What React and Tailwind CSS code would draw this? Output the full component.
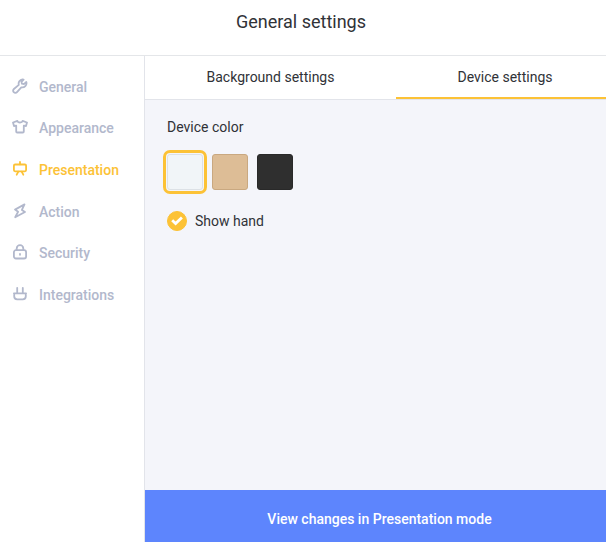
import { useState } from "react";

const icons = {
  General: (
    <path d="M10.500 1.500a4.200 4.200 0 0 0-3.700 5.400L1.900 11a2.200 2.200 0 1 0 3.100 3.100L9.300 9.300a4.200 4.200 0 0 0 5-5.300l-2.400 2.100-2-.4-.4-1.800 2.100-2.200z" />
  ),
  Appearance: (
    <path d="M5.400 1.900 1 3.500l1 3.500 2.200-.3v5.800c0 .6.400 1 1 1h5.600c.6 0 1-.4 1-1V6.700l2.200.3 1-3.500-4.400-1.600C10.200 4 5.800 4 5.400 1.900z" />
  ),
  Presentation: (
    <>
      <rect x="1.900" y="3.500" width="12.200" height="6.800" rx="1.200" />
      <path d="M8 1v2.300M6.200 10.800l-1.500 2.900M9.800 10.800l1.500 2.900" />
    </>
  ),
  Action: (
    <path d="M12.500 1.400 9.900 6.900 13 9 3.200 14.200 6.100 8.800 3 6.600z" />
  ),
  Security: (
    <>
      <rect x="1.900" y="6.200" width="12.200" height="8.300" rx="2" />
      <path d="M4.700 6.200V4.500a3.300 3.300 0 0 1 6.600 0v1.700" />
      <path d="M8 10v.8" />
    </>
  ),
  Integrations: (
    <path d="M1.900 7.300h12.200M2.200 7.300v3a3 3 0 0 0 3 3h5.600a3 3 0 0 0 3-3v-3M5.200 7V1.800M10.800 7V1.800" />
  ),
};

const deviceColors = [
  { name: "White", fill: "bg-[#f1f5f8] border-[#dce1e6]" },
  { name: "Gold", fill: "bg-[#ddbd96] border-[#c9a880]" },
  { name: "Black", fill: "bg-[#2f2f2f] border-[#292929]" },
];

function NavItem({ label, active, onSelect }) {
  return (
    <li className="flex">
      <button
        type="button"
        onClick={onSelect}
        aria-current={active ? "page" : undefined}
        className={`flex w-full items-center gap-[11px] pl-3 text-left text-sm font-medium ${
          active ? "text-[#fcc236]" : "text-[#b2b8cc]"
        }`}
      >
        <svg
          viewBox="0 0 16 16"
          className="mb-0.5 size-4 shrink-0"
          fill="none"
          stroke="currentColor"
          strokeWidth="1.8"
          strokeLinecap="round"
          strokeLinejoin="round"
          aria-hidden="true"
        >
          {icons[label]}
        </svg>
        {label}
      </button>
    </li>
  );
}

export default function App() {
  const [section, setSection] = useState("Presentation");
  const [color, setColor] = useState("White");
  const [showHand, setShowHand] = useState(true);

  return (
    <div className="flex min-h-screen flex-col bg-white font-[Roboto,'Liberation_Sans',sans-serif] text-[#303237]">
      <header className="flex h-14 items-center justify-center border-b border-[#e4e6e9] pr-1 pb-3">
        <h1 className="text-lg leading-6">General settings</h1>
      </header>
      <div className="flex grow">
        <nav className="w-[145px] shrink-0 border-r border-[#e2e4ea] pt-2.5" aria-label="Settings">
          <ul className="grid h-[250px] grid-rows-6">
            {Object.keys(icons).map((label) => (
              <NavItem
                key={label}
                label={label}
                active={label === section}
                onSelect={() => setSection(label)}
              />
            ))}
          </ul>
        </nav>
        <main className="flex grow flex-col bg-[#f4f5fa]">
          <div role="tablist" className="grid h-11 grid-cols-[251fr_210fr] border-b border-[#e2e4ea] bg-white text-sm">
            <button type="button" role="tab" aria-selected="false" className="border-b-2 border-transparent">
              Background settings
            </button>
            <button
              type="button"
              role="tab"
              aria-selected="true"
              className="border-b-2 border-[#fcc236] pl-2"
            >
              Device settings
            </button>
          </div>
          <section className="grow px-[22px] pt-[17px]">
            <h2 id="device-color" className="text-sm leading-5">
              Device color
            </h2>
            <div role="radiogroup" aria-labelledby="device-color" className="mt-[17px] flex gap-[9px]">
              {deviceColors.map(({ name, fill }) => (
                <input
                  key={name}
                  type="radio"
                  name="device-color"
                  aria-label={name}
                  checked={color === name}
                  onChange={() => setColor(name)}
                  className={`size-9 appearance-none rounded-[3px] border outline-offset-1 checked:outline-3 checked:outline-[#fcc236] ${fill}`}
                />
              ))}
            </div>
            <label className="mt-[21px] flex w-fit items-center gap-2 text-sm leading-5">
              <span className="grid size-5 place-items-center">
                <input
                  type="checkbox"
                  checked={showHand}
                  onChange={(e) => setShowHand(e.target.checked)}
                  className="col-start-1 row-start-1 size-5 appearance-none rounded-full border border-[#fcc236] checked:bg-[#fcc236]"
                />
                {showHand && (
                  <svg
                    viewBox="0 0 20 20"
                    className="pointer-events-none col-start-1 row-start-1 size-5"
                    fill="none"
                    stroke="white"
                    strokeWidth="2.8"
                    aria-hidden="true"
                  >
                    <path d="M5.200 9.200 8.600 12.500 14.900 6.500" />
                  </svg>
                )}
              </span>
              Show hand
            </label>
          </section>
          <button type="button" className="h-[52px] bg-[#5d85fd] pt-1.5 pl-2 text-sm font-medium text-white">
            View changes in Presentation mode
          </button>
        </main>
      </div>
    </div>
  );
}
